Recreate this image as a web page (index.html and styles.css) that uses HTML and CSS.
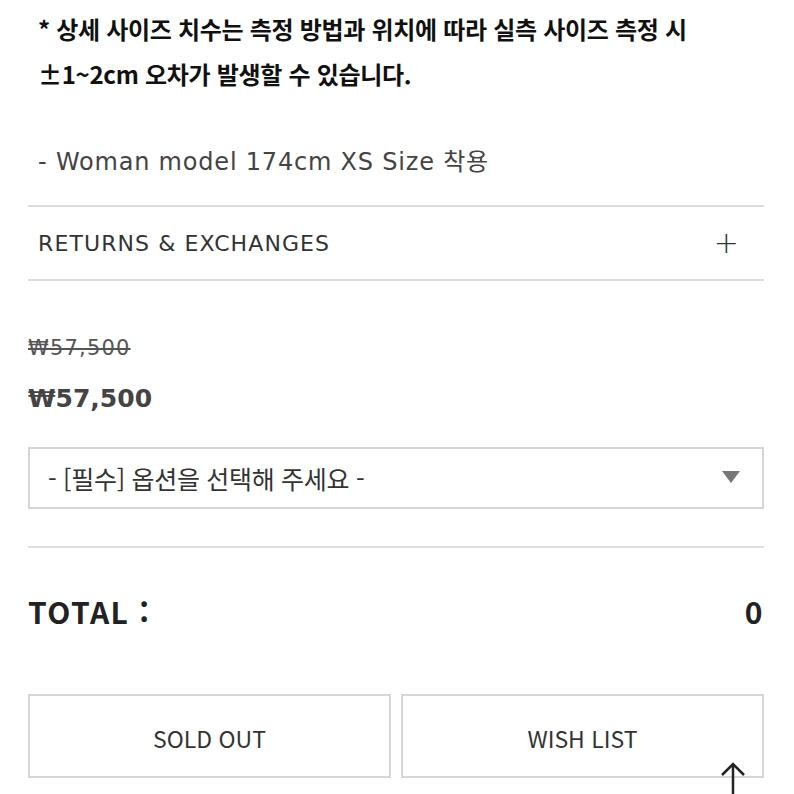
FILE: index.html
```html
<!DOCTYPE html>
<html lang="ko">
<head>
  <meta charset="UTF-8">
  <title>Product Detail</title>
  <link rel="stylesheet" href="styles.css">
</head>
<body>
  <main class="product-info">
    <!-- Size notice -->
    <div class="size-notice">
      <p>* 상세 사이즈 치수는 측정 방법과 위치에 따라 실측 사이즈 측정 시</p>
      <p>±1~2cm 오차가 발생할 수 있습니다.</p>
    </div>
    <p class="model-info">- Woman model 174cm XS Size 착용</p>

    <!-- Accordion -->
    <div class="accordion">
      <span>RETURNS &amp; EXCHANGES</span>
      <span class="accordion-plus">+</span>
    </div>

    <!-- Price -->
    <div class="price-box">
      <p class="price-old">₩57,500</p>
      <p class="price-now">₩57,500</p>
    </div>

    <div class="option-select">
      <span>- [필수] 옵션을 선택해 주세요 -</span>
      <span class="select-arrow"></span>
    </div>

    <div class="total-row">
      <span>TOTAL :</span>
      <span>0</span>
    </div>

    <div class="actions">
      <button class="action-btn">SOLD OUT</button>
      <button class="action-btn">WISH LIST</button>
    </div>
  </main>

  <a class="to-top" href="#">
    <svg width="30" height="34" viewBox="0 0 30 34">
      <path d="M15 4 L15 34 M4 15 L15 4 L26 15" fill="none" stroke="#222" stroke-width="2.5"/>
    </svg>
  </a>
</body>
</html>
```

FILE: styles.css
```css
/* General */
body {
  margin: 0;
  padding: 0;
  font-family: "Noto Sans CJK KR", "Noto Sans", sans-serif;
  color: #333;
  background: #fff;
  overflow: hidden;
}

p {
  margin: 0;
}

.product-info {
  padding: 0 30px 0 28px;
}

.size-notice {
  padding: 6px 0 0 10px;
}

.size-notice p {
  font-size: 24px;
  font-weight: bold;
  color: #111;
  line-height: 45px;
  letter-spacing: -0.3px;
}

.model-info {
  font-family: "DejaVu Sans", "Noto Sans CJK KR", sans-serif;
  font-size: 24px;
  color: #444;
  line-height: 30px;
  padding: 51px 0 0 10px;
  height: 58px;
  letter-spacing: 0.8px;
}

/* Accordion */
.accordion {
  display: flex;
  justify-content: space-between;
  align-items: center;
  height: 72px;
  border-top: 2px solid #ddd;
  border-bottom: 2px solid #ddd;
  padding: 0 24px 0 10px;
  font-family: "DejaVu Sans", sans-serif;
  font-size: 22px;
  letter-spacing: 1.1px;
  color: #333;
}

.accordion-plus {
  font-size: 30px;
  font-weight: 300;
  line-height: 1;
}

/* Price */
.price-box {
  padding-top: 54px;
}

.price-old {
  font-family: "DejaVu Sans", sans-serif;
  font-size: 21px;
  color: #555;
  line-height: 26px;
  letter-spacing: 1.2px;
  text-decoration: line-through;
}

.price-now {
  font-family: "DejaVu Sans", sans-serif;
  font-size: 25px;
  font-weight: bold;
  color: #444;
  line-height: 32px;
  margin-top: 22px;
}

.option-select {
  display: flex;
  justify-content: space-between;
  align-items: center;
  height: 58px;
  margin-top: 32px;
  border: 2px solid #d6d6d6;
  padding: 0 22px 0 18px;
  font-size: 25px;
  letter-spacing: -0.3px;
  color: #333;
}

.select-arrow {
  width: 0;
  height: 0;
  border-left: 9px solid transparent;
  border-right: 9px solid transparent;
  border-top: 12px solid #777;
  margin-bottom: 2px;
}

/* Total */
.total-row {
  display: flex;
  justify-content: space-between;
  align-items: center;
  margin-top: 37px;
  border-top: 2px solid #ddd;
  height: 126px;
  font-size: 30px;
  font-weight: bold;
  color: #222;
  letter-spacing: 1.5px;
}

/* Buttons */
.actions {
  display: flex;
  gap: 10px;
  margin-top: 20px;
}

.action-btn {
  flex: 1;
  height: 84px;
  background: #fff;
  border: 2px solid #d6d6d6;
  font-family: "Noto Sans CJK KR", sans-serif;
  font-size: 23px;
  letter-spacing: 0;
  color: #333;
  padding: 4px 0 0;
}

.to-top {
  position: absolute;
  left: 718px;
  top: 760px;
}
```
